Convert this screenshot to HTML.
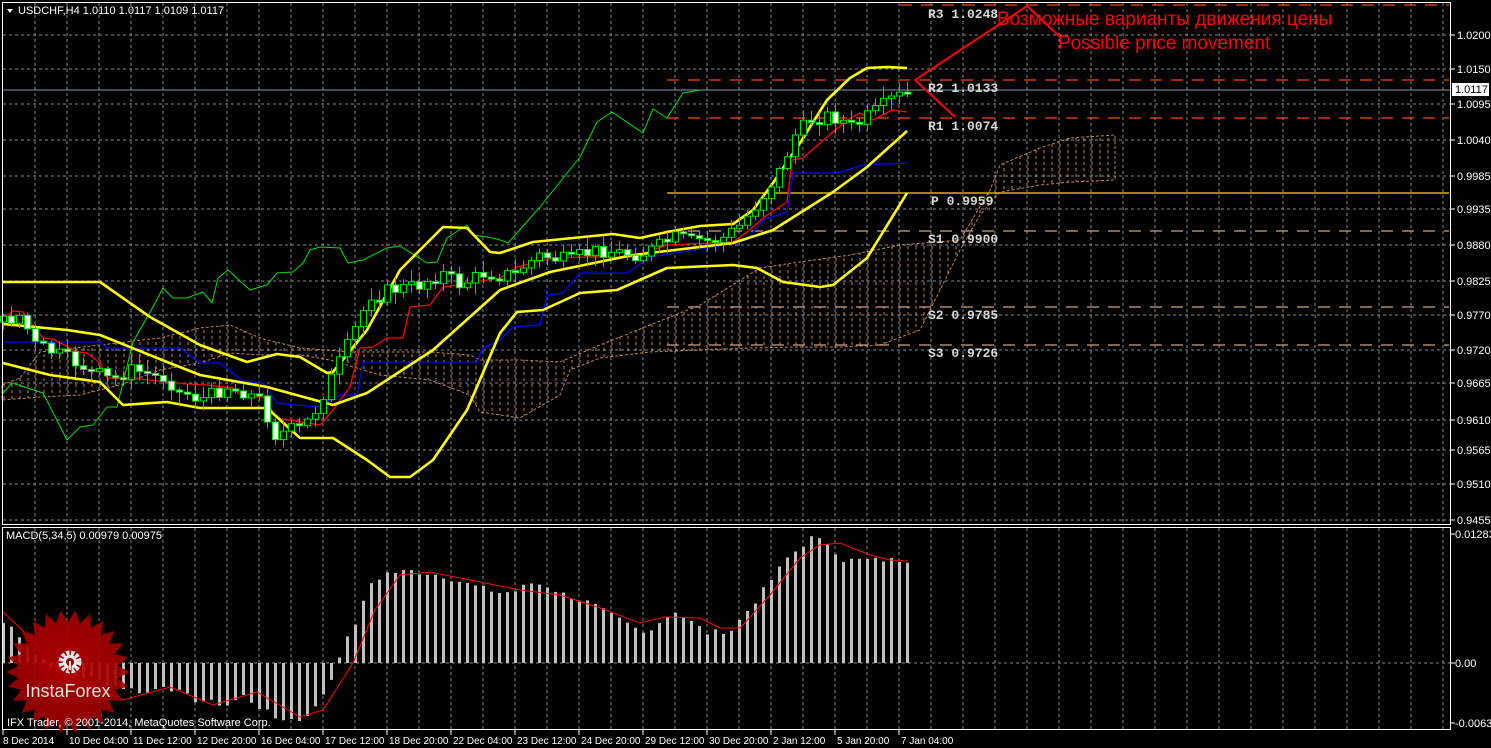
<!DOCTYPE html>
<html><head><meta charset="utf-8"><style>
html,body{margin:0;padding:0;background:#000;width:1491px;height:748px;overflow:hidden}
svg{display:block}
text{font-family:"Liberation Sans",sans-serif}
.ax{fill:#fff;font-size:11px}
.bx{fill:#fff;font-size:10px}
.pv{font-family:"Liberation Mono",monospace;font-weight:bold;font-size:13px;fill:#d8d8d8}
</style></head><body>
<svg id="s" width="1491" height="748" viewBox="0 0 1491 748" xmlns="http://www.w3.org/2000/svg">
<defs>
<pattern id="hatch" width="8" height="6" patternUnits="userSpaceOnUse">
<line x1="4" y1="0" x2="4" y2="3" stroke="#f4a460" stroke-width="1"/>
</pattern>
<radialGradient id="rg" cx="50%" cy="45%" r="55%"><stop offset="0" stop-color="#c00000"/><stop offset="1" stop-color="#9a0000"/></radialGradient>
</defs>
<rect width="1491" height="748" fill="#000"/>
<g id="grid" stroke="#7f8a99" stroke-width="1" stroke-dasharray="3,3"></g>
<polygon points="2,385 20,378 40,352 100,345 160,338 200,328 230,325 260,338 300,348 350,352 430,352 470,355 480,360 520,360 560,362 600,345 650,325 700,305 760,268 800,262 850,255 900,245 960,240 990,190 1000,165 1040,148 1070,138 1115,135 1115,180 1070,182 1040,185 1000,192 980,215 960,250 940,290 920,330 880,345 840,347 800,347 750,348 700,350 650,352 600,358 570,370 560,395 520,418 480,412 470,395 430,380 380,375 330,360 300,355 260,355 230,353 200,363 160,370 120,385 80,395 40,397 2,400" fill="url(#hatch)" stroke="#f4a460" stroke-width="1" stroke-dasharray="3,2" opacity="0.8"/>
<g stroke-width="1.3">
<line x1="900" y1="5" x2="1449" y2="5" stroke="#ff4500" stroke-dasharray="12,9"/>
<line x1="667" y1="80" x2="1449" y2="80" stroke="#ff4500" stroke-dasharray="12,9"/>
<line x1="667" y1="118" x2="1449" y2="118" stroke="#ff4500" stroke-dasharray="12,9"/>
<line x1="667" y1="193" x2="1449" y2="193" stroke="#ffd700"/>
<line x1="667" y1="231" x2="1449" y2="231" stroke="#d2a080" stroke-dasharray="12,9"/>
<line x1="667" y1="307" x2="1449" y2="307" stroke="#d2a080" stroke-dasharray="12,9"/>
<line x1="667" y1="345" x2="1449" y2="345" stroke="#d2a080" stroke-dasharray="12,9"/>
</g>
<line x1="2" y1="90" x2="1451" y2="90" stroke="#8898aa" stroke-width="1"/>
<g fill="none" stroke-linejoin="round">
<polyline stroke="#00e000" stroke-width="1" points="3,393 12,383 43,393 67,440 80,427 93,425 107,407 117,407 133,342 153,307 163,288 173,298 187,298 203,292 212,303 218,278 228,270 250,290 267,285 277,273 293,272 303,263 310,250 320,247 340,248 348,263 363,260 387,248 400,246 427,263 437,262 447,238 467,225 473,235 493,238 500,240 508,243 540,207 580,157 597,122 612,112 643,133 653,109 667,118 683,93 700,90"/>
<polyline stroke="#0000ff" stroke-width="1.3" points="3,342 100,342 107,348 180,348 200,363 220,363 243,381 263,383 277,403 317,407 340,395 357,395 363,362 477,362 483,348 500,340 513,327 540,325 547,295 563,293 580,273 627,273 650,257 707,248 747,240 763,220 787,212 793,173 837,173 863,165 907,163"/>
<polyline stroke="#ff0000" stroke-width="1.3" points="3,318 13,311 23,312 43,338 53,339 77,352 87,353 100,363 107,378 140,379 187,384 207,385 233,388 243,397 263,397 277,418 320,425 333,410 350,387 360,348 373,347 387,338 403,338 410,307 430,305 443,287 500,278 517,267 553,258 587,257 633,257 667,245 733,242 747,232 767,215 787,202 792,160 803,158 820,143 847,120 860,113 873,120 892,110 907,112"/>
<g stroke="#ffff00" stroke-width="2.6">
<polyline points="3,282 100,282 150,317 200,345 247,362 277,354 300,357 327,373 333,372 367,330 400,270 443,227 467,228 490,252 500,253 533,242 613,234 640,238 667,232 700,226 733,224 753,210 773,183 800,143 827,100 850,78 867,68 887,67 907,68"/>
<polyline points="3,324 67,330 100,335 167,362 200,375 267,387 333,405 367,393 433,350 500,290 550,272 633,255 733,243 773,230 833,192 867,167 907,131"/>
<polyline points="3,363 50,375 100,382 123,405 167,402 200,408 267,408 300,438 333,438 367,460 390,477 410,477 433,460 467,410 500,333 517,312 543,310 580,293 617,290 667,268 733,265 757,268 783,282 820,287 833,285 867,258 907,193"/>
</g>
</g>
<g id="candles"></g>
<polyline points="1060,37 1027,6 915,80 955,117" fill="none" stroke="#ff0000" stroke-width="2"/>
<text x="997" y="25" fill="#ff0000" font-size="19">Возможные варианты движения цены</text>
<text x="1058" y="49" fill="#ff0000" font-size="19">Possible price movement</text>
<text class="pv" x="928" y="18">R3 1.0248</text>
<text class="pv" x="928" y="92">R2 1.0133</text>
<text class="pv" x="928" y="130">R1 1.0074</text>
<text class="pv" x="931" y="205">P 0.9959</text>
<text class="pv" x="928" y="243">S1 0.9900</text>
<text class="pv" x="928" y="319">S2 0.9785</text>
<text class="pv" x="928" y="357">S3 0.9726</text>
<line x1="2" y1="663" x2="1451" y2="663" stroke="#7f8a99" stroke-dasharray="3,3"/>
<g id="macd" fill="#c0c0c0"></g>
<polyline fill="none" stroke="#ff0000" stroke-width="1" points="3,612 33,640 50,667 83,682 123,700 170,687 213,705 257,692 300,717 323,710 353,663 375,610 400,575 430,572 470,580 520,590 560,595 600,608 640,623 665,617 700,618 720,628 740,628 770,595 800,558 820,545 840,543 870,555 890,560 908,561"/>
<rect x="2.5" y="2.5" width="1448" height="522" fill="none" stroke="#fff" stroke-width="1"/>
<rect x="2.5" y="527.5" width="1448" height="202" fill="none" stroke="#fff" stroke-width="1"/>
<g opacity="0.9">
<polygon id="star" fill="url(#rg)"/>
<g transform="translate(70,662)" fill="#fff">
<circle r="9" fill="none" stroke="#fff" stroke-width="5" stroke-dasharray="3.2,1.6"/>
<circle r="7"/>
<circle r="4" fill="#a00000"/>
<rect x="-1.5" y="-2" width="3" height="12" fill="#a00000"/>
<rect x="-1" y="-1" width="2" height="9"/>
</g>
<text x="68" y="697" text-anchor="middle" fill="#fff" font-size="18">InstaForex</text>
</g>
<text class="ax" x="7" y="726">IFX Trader, © 2001-2014, MetaQuotes Software Corp.</text>
<polygon points="7,9 13,9 10,13" fill="#fff"/>
<text class="ax" x="18" y="14">USDCHF,H4  1.0110 1.0117 1.0109 1.0117</text>
<text class="ax" x="6" y="539">MACD(5,34,5) 0.00979 0.00975</text>
<g id="axis"></g>
<rect x="1452" y="83" width="37" height="13" fill="#fff"/>
<text x="1455" y="93" font-size="11" fill="#000">1.0117</text>
</svg>
<script>
(function(){
var NS="http://www.w3.org/2000/svg";
function el(p,t,a,txt){var e=document.createElementNS(NS,t);for(var k in a)e.setAttribute(k,a[k]);if(txt!=null)e.textContent=txt;document.getElementById(p).appendChild(e);return e;}
function interp(P,x){for(var i=0;i<P.length-1;i++){if(x<=P[i+1][0]){var a=P[i],b=P[i+1];return a[1]+(b[1]-a[1])*(x-a[0])/(b[0]-a[0]);}}return P[P.length-1][1];}
var seed=7;function rnd(){seed=(seed*9301+49297)%233280;return seed/233280;}
var hy=[35,69,104,140,176,209,245,281,315,350,383,420,450,484,520];
hy.forEach(function(y){el("grid","line",{x1:3,y1:y,x2:1450,y2:y});});
for(var x=35;x<1450;x+=32){el("grid","line",{x1:x,y1:3,x2:x,y2:524});el("grid","line",{x1:x,y1:528,x2:x,y2:729});}
var lab=["1.0200","1.0150","1.0095","1.0040","0.9985","0.9935","0.9880","0.9825","0.9770","0.9720","0.9665","0.9610","0.9565","0.9510","0.9455"];
hy.forEach(function(y,i){el("axis","line",{x1:1451,y1:y,x2:1455,y2:y,stroke:"#fff"});el("axis","text",{x:1457,y:y+4,"class":"ax"},lab[i]);});
[[534,"0.01283"],[663,"0.00"],[723,"-0.00636"]].forEach(function(a){el("axis","line",{x1:1451,y1:a[0],x2:1455,y2:a[0],stroke:"#fff"});el("axis","text",{x:1455,y:a[0]+4,"class":"ax"},a[1]);});
var bl=["8 Dec 2014","10 Dec 04:00","11 Dec 12:00","12 Dec 20:00","16 Dec 04:00","17 Dec 12:00","18 Dec 20:00","22 Dec 04:00","23 Dec 12:00","24 Dec 20:00","29 Dec 12:00","30 Dec 20:00","2 Jan 12:00","5 Jan 20:00","7 Jan 04:00"];
bl.forEach(function(t,i){var x=i==0?3:(67+64*(i-1));el("axis","line",{x1:x,y1:730,x2:x,y2:735,stroke:"#fff"});el("axis","text",{x:x+(i==0?0:2),y:744,"class":"bx"},t);});
var mk=[[3,40],[11,36],[19,28],[27,18],[35,8],[50,0],[60,-8],[90,-15],[125,-25],[147,-30],[163,-22],[195,-37],[227,-42],[243,-33],[275,-55],[299,-57],[315,-45],[331,-16],[339,8],[355,40],[371,80],[387,90],[411,92],[440,88],[470,78],[500,70],[515,72],[530,80],[545,78],[560,70],[590,60],[603,52],[643,30],[675,52],[707,30],[731,33],[755,62],[787,105],[811,125],[827,120],[843,103],[907,103]];
for(var i=0;i<=113;i++){var x=3+8*i;var h=interp(mk,x)+(rnd()-0.5)*6;if(h>=0)el("macd","rect",{x:x-1,y:663-h,width:3,height:h});else el("macd","rect",{x:x-1,y:663,width:3,height:-h});}
var ck=[[3,322],[20,315],[35,345],[60,355],[90,370],[110,380],[130,370],[160,375],[180,390],[200,400],[230,385],[260,400],[275,435],[290,430],[310,420],[330,380],[350,340],[370,295],[390,290],[420,285],[440,272],[460,285],[490,270],[510,275],[540,255],[560,260],[600,250],[640,255],[660,245],[680,235],[700,240],[720,240],[740,225],[760,200],[780,170],[795,135],[810,120],[830,115],[850,125],[870,115],[890,100],[907,92]];
var prev=interp(ck,3);
for(var i=0;i<=113;i++){var x=3+8*i;var c=interp(ck,x)+(rnd()-0.5)*14;var o=prev;if(Math.abs(c-o)<2)c=o+2;
var tp=Math.min(o,c),bt=Math.max(o,c);var hi=tp-2-rnd()*10,lo=bt+2+rnd()*10;
el("candles","line",{x1:x+0.5,y1:hi,x2:x+0.5,y2:lo,stroke:"#00e000","stroke-width":1});
var bear=c>o;el("candles","rect",{x:x-2.5,y:tp,width:6,height:bt-tp,fill:bear?"#fff":"#000",stroke:"#00e000","stroke-width":1});prev=c;}
var P=[],n=26,cx=68,cy=672;for(var k=0;k<2*n;k++){var r=k%2?50:62;var a=Math.PI*k/n;P.push((cx+r*Math.cos(a)).toFixed(1)+","+(cy+r*Math.sin(a)).toFixed(1));}
document.getElementById("star").setAttribute("points",P.join(" "));
})();
</script>
</body></html>
